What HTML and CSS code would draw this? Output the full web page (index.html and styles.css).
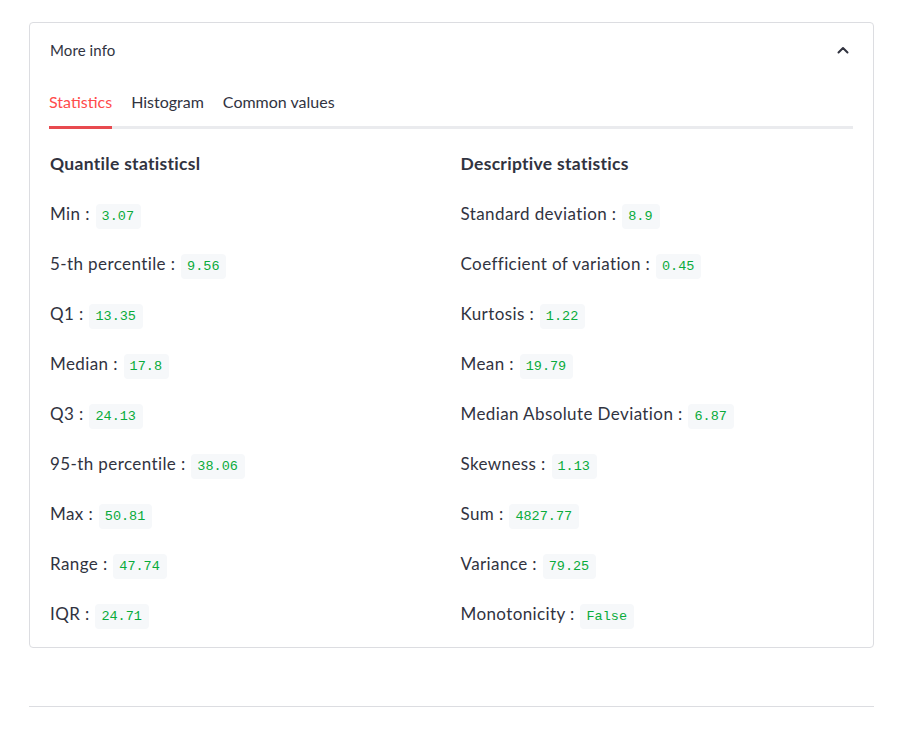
FILE: index.html
```html
<!DOCTYPE html>
<html>
<head>
<meta charset="utf-8">
<link rel="stylesheet" href="styles.css">
</head>
<body>
<div class="page">
  <div class="expander">
    <div class="exp-header">
      <span class="exp-title">More info</span>
      <svg class="chev" width="14" height="14" viewBox="0 0 14 14"><path d="M2.5 9.5 L7 5 L11.5 9.5" fill="none" stroke="#31333f" stroke-width="2" stroke-linecap="round" stroke-linejoin="round"/></svg>
    </div>
    <div class="exp-body">
      <div class="tabs">
        <div class="tab active">Statistics</div>
        <div class="tab">Histogram</div>
        <div class="tab">Common values</div>
      </div>
      <div class="cols">
        <div class="col">
          <h4 class="col-title">Quantile statisticsl</h4>
          <p class="row">Min : <code>3.07</code></p>
          <p class="row">5-th percentile : <code>9.56</code></p>
          <p class="row">Q1 : <code>13.35</code></p>
          <p class="row">Median : <code>17.8</code></p>
          <p class="row">Q3 : <code>24.13</code></p>
          <p class="row">95-th percentile : <code>38.06</code></p>
          <p class="row">Max : <code>50.81</code></p>
          <p class="row">Range : <code>47.74</code></p>
          <p class="row">IQR : <code>24.71</code></p>
        </div>
        <div class="col">
          <h4 class="col-title">Descriptive statistics</h4>
          <p class="row">Standard deviation : <code>8.9</code></p>
          <p class="row">Coefficient of variation : <code>0.45</code></p>
          <p class="row">Kurtosis : <code>1.22</code></p>
          <p class="row">Mean : <code>19.79</code></p>
          <p class="row">Median Absolute Deviation : <code>6.87</code></p>
          <p class="row">Skewness : <code>1.13</code></p>
          <p class="row">Sum : <code>4827.77</code></p>
          <p class="row">Variance : <code>79.25</code></p>
          <p class="row">Monotonicity : <code>False</code></p>
        </div>
      </div>
    </div>
  </div>
  <hr class="divider">
</div>
</body>
</html>
```
FILE: styles.css
```css
html, body {
  margin: 0;
  padding: 0;
  background: #ffffff;
}
body {
  font-family: "Lato", "Noto Sans", sans-serif;
  color: #31333f;
}
.page {
  padding: 22px 47px 0 29px;
}
.expander {
  border: 1px solid #dcdde1;
  border-radius: 4px;
}
.exp-header {
  display: flex;
  align-items: center;
  justify-content: space-between;
  height: 55px;
  padding: 0 23px 0 20px;
}
.exp-title {
  font-size: 15px;
  color: #31333f;
  padding-bottom: 2px;
  letter-spacing: 0.1px;
}
.chev {
  display: block;
  margin-bottom: 2px;
}
.exp-body {
  padding: 0 20px 8px 19px;
}
.tabs {
  display: flex;
  gap: 19px;
  border-bottom: 3px solid #eaebee;
  height: 51px;
  box-sizing: border-box;
}
.tab {
  font-size: 16px;
  color: #31333f;
  padding-top: 14px;
  margin-bottom: -3px;
  border-bottom: 3px solid transparent;
}
.tab.active {
  color: #ff4b4b;
  border-bottom-color: #e84a4f;
}
.cols {
  display: grid;
  grid-template-columns: 1fr 1fr;
  column-gap: 18px;
  padding-left: 1px;
  padding-top: 10px;
}
.col-title {
  margin: 0;
  font-size: 17.5px;
  font-weight: 700;
  letter-spacing: 0.3px;
  line-height: 50px;
  height: 50px;
}
.row {
  margin: 0;
  font-size: 17px;
  letter-spacing: 0.4px;
  line-height: 50px;
  height: 50px;
}
code {
  font-family: "Liberation Mono", "DejaVu Sans Mono", monospace;
  font-size: 13.5px;
  letter-spacing: 0;
  color: #09ab3b;
  background: #f6f8fa;
  border-radius: 4px;
  padding: 5px 7px 5px 6px;
  margin-left: 1px;
}
.divider {
  border: 0;
  border-top: 1px solid #dcdde1;
  margin: 58px 0 0 0;
}
```
